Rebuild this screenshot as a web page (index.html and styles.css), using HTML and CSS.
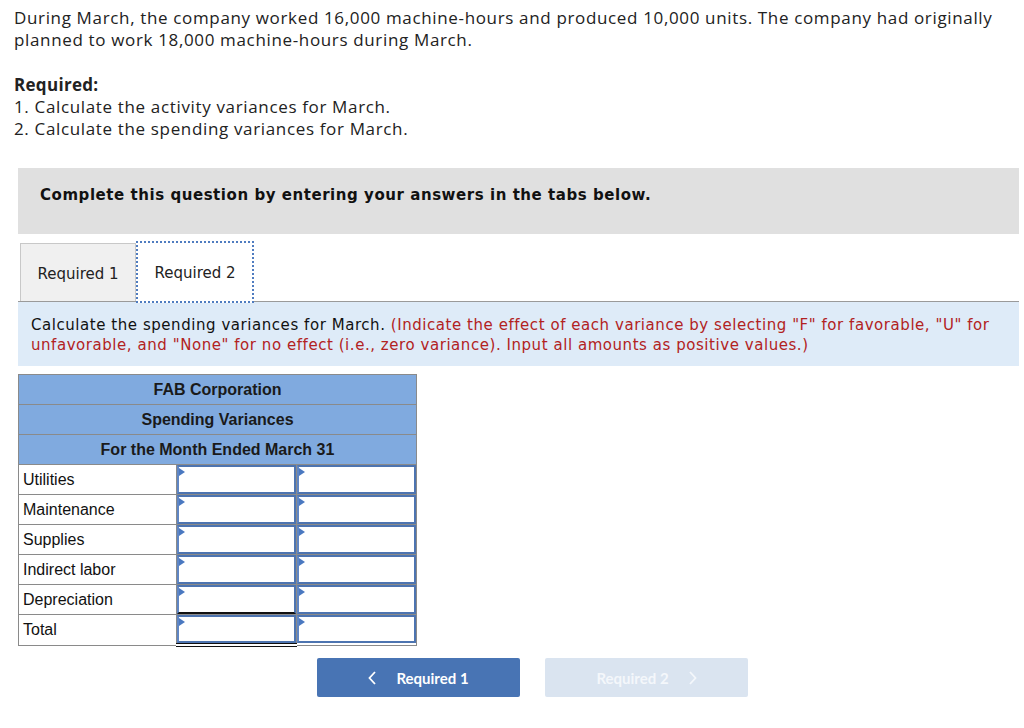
FILE: index.html
```html
<!DOCTYPE html>
<html>
<head>
<meta charset="utf-8">
<link rel="stylesheet" href="styles.css">
</head>
<body>
<div class="page">
  <div class="intro">
    <p class="para">During March, the company worked 16,000 machine-hours and produced 10,000 units. The company had originally planned to work 18,000 machine-hours during March.</p>
    <p class="req-title">Required:</p>
    <p class="req-item">1. Calculate the activity variances for March.</p>
    <p class="req-item">2. Calculate the spending variances for March.</p>
  </div>

  <div class="complete-box">Complete this question by entering your answers in the tabs below.</div>

  <div class="tabs">
    <div class="tab">Required 1</div>
    <div class="tab tab-active">Required 2</div>
  </div>

  <div class="instruction">
    Calculate the spending variances for March. <span class="red">(Indicate the effect of each variance by selecting "F" for favorable, "U" for unfavorable, and "None" for no effect (i.e., zero variance). Input all amounts as positive values.)</span>
  </div>

  <table class="sheet">
    <colgroup>
      <col class="c1"><col class="c2"><col class="c3">
    </colgroup>
    <tr class="head"><td colspan="3">FAB Corporation</td></tr>
    <tr class="head"><td colspan="3">Spending Variances</td></tr>
    <tr class="head"><td colspan="3">For the Month Ended March 31</td></tr>
    <tr><td class="label">Utilities</td><td class="inp"><div class="box"><i class="tri"></i></div></td><td class="inp"><div class="box"><i class="tri"></i></div></td></tr>
    <tr><td class="label">Maintenance</td><td class="inp"><div class="box"><i class="tri"></i></div></td><td class="inp"><div class="box"><i class="tri"></i></div></td></tr>
    <tr><td class="label">Supplies</td><td class="inp"><div class="box"><i class="tri"></i></div></td><td class="inp"><div class="box"><i class="tri"></i></div></td></tr>
    <tr><td class="label">Indirect labor</td><td class="inp"><div class="box"><i class="tri"></i></div></td><td class="inp"><div class="box"><i class="tri"></i></div></td></tr>
    <tr><td class="label">Depreciation</td><td class="inp under"><div class="box"><i class="tri"></i></div></td><td class="inp"><div class="box"><i class="tri"></i></div></td></tr>
    <tr class="last"><td class="label">Total</td><td class="inp dbl"><div class="box"><i class="tri"></i></div></td><td class="inp"><div class="box"><i class="tri"></i></div></td></tr>
  </table>

  <div class="nav">
    <div class="btn btn-prev">
      <svg class="chev" width="8" height="14" viewBox="0 0 8 14"><path d="M7 1 L1.5 7 L7 13" fill="none" stroke="#fff" stroke-width="1.8"/></svg>
      <span>Required 1</span>
    </div>
    <div class="btn btn-next">
      <span>Required 2</span>
      <svg class="chev" width="8" height="14" viewBox="0 0 8 14"><path d="M1 1 L6.5 7 L1 13" fill="none" stroke="#f4f7fb" stroke-width="1.8"/></svg>
    </div>
  </div>
</div>
</body>
</html>
```

FILE: styles.css
```css
html, body {
  margin: 0;
  padding: 0;
  background: #fff;
}
.page {
  padding: 7px 5px 0 18px;
}
.intro {
  margin-left: -4px;
  font-family: "Open Sans", "Liberation Sans", sans-serif;
  font-size: 17px;
  letter-spacing: 0.65px;
  line-height: 22px;
  color: #222;
}
.intro p {
  margin: 0;
}
.para {
  margin-bottom: 23px !important;
}
.req-title {
  font-weight: bold;
  letter-spacing: 0.3px;
}
.complete-box {
  margin-top: 28px;
  height: 66px;
  box-sizing: border-box;
  background: #e0e0e0;
  display: flex;
  align-items: center;
  padding-left: 22px;
  padding-bottom: 12px;
  font-family: "DejaVu Sans", sans-serif;
  font-weight: bold;
  font-size: 15px;
  letter-spacing: 0.55px;
  color: #111;
  width: 1001px;
}
.tabs {
  display: flex;
  align-items: flex-end;
  margin-top: 7px;
  padding-left: 2px;
  height: 60px;
}
.tab {
  box-sizing: border-box;
  width: 116px;
  height: 58px;
  background: #f0f0f0;
  border: 1px solid #c8c8c8;
  border-bottom: none;
  display: flex;
  align-items: center;
  justify-content: center;
  font-family: "DejaVu Sans", sans-serif;
  font-size: 15px;
  color: #222;
  padding-top: 2px;
}
.tab-active {
  width: 118px;
  height: 62px;
  background: #fff;
  border: 2px dotted #4f7cc0;
  margin-bottom: -2px;
  position: relative;
  z-index: 1;
}
.instruction {
  width: 977px;
  box-sizing: content-box;
  border-top: 1px solid #9a9a9a;
  background: #deebf8;
  padding: 13px 11px 10px 13px;
  font-family: "DejaVu Sans", sans-serif;
  font-size: 15px;
  letter-spacing: 0.55px;
  line-height: 20px;
  color: #111;
  height: 41px;
}
.red {
  color: #b22222;
}
.sheet {
  margin-top: 8px;
  border-collapse: collapse;
  table-layout: fixed;
  width: 398px;
  border: 1px solid #8a8a8a;
  font-family: "Liberation Sans", Arial, sans-serif;
  font-size: 16px;
  color: #111;
}
.c1 { width: 158px; }
.c2 { width: 120px; }
.c3 { width: 120px; }
.sheet td {
  height: 29px;
  padding: 0;
  border: 1px solid #8a8a8a;
}
.head td {
  background: #80aadf;
  text-align: center;
  font-weight: bold;
  color: #1a1a1a;
}
.label {
  padding-left: 4px !important;
  background: #fff;
}
.last td {
  height: 28px;
}
.inp {
  position: relative;
  vertical-align: top;
}
.box {
  position: relative;
  box-sizing: border-box;
  height: 29px;
  border: 2px solid #4d74b0;
  border-left-color: #5f86c4;
  background: #fff;
}
.last .box {
  height: 28px;
}
.tri {
  position: absolute;
  left: 0;
  top: 1px;
  width: 0;
  height: 0;
  border-top: 4px solid transparent;
  border-bottom: 4px solid transparent;
  border-left: 6px solid #4a78c0;
}
.under .box {
  border-bottom: 2px solid #111;
}
.dbl {
  border-bottom: 4px double #111 !important;
}
.nav {
  display: flex;
  gap: 25px;
  padding-left: 299px;
  margin-top: 11px;
}
.btn {
  box-sizing: border-box;
  width: 203px;
  height: 39px;
  border-radius: 2px;
  display: flex;
  align-items: center;
  justify-content: center;
  gap: 20px;
  font-family: "Lato", "Liberation Sans", sans-serif;
  font-weight: bold;
  font-size: 15px;
  color: #fff;
}
.btn-prev {
  background: #4874b4;
}
.btn-next {
  background: #dae4f0;
  color: #f4f7fb;
}
```
